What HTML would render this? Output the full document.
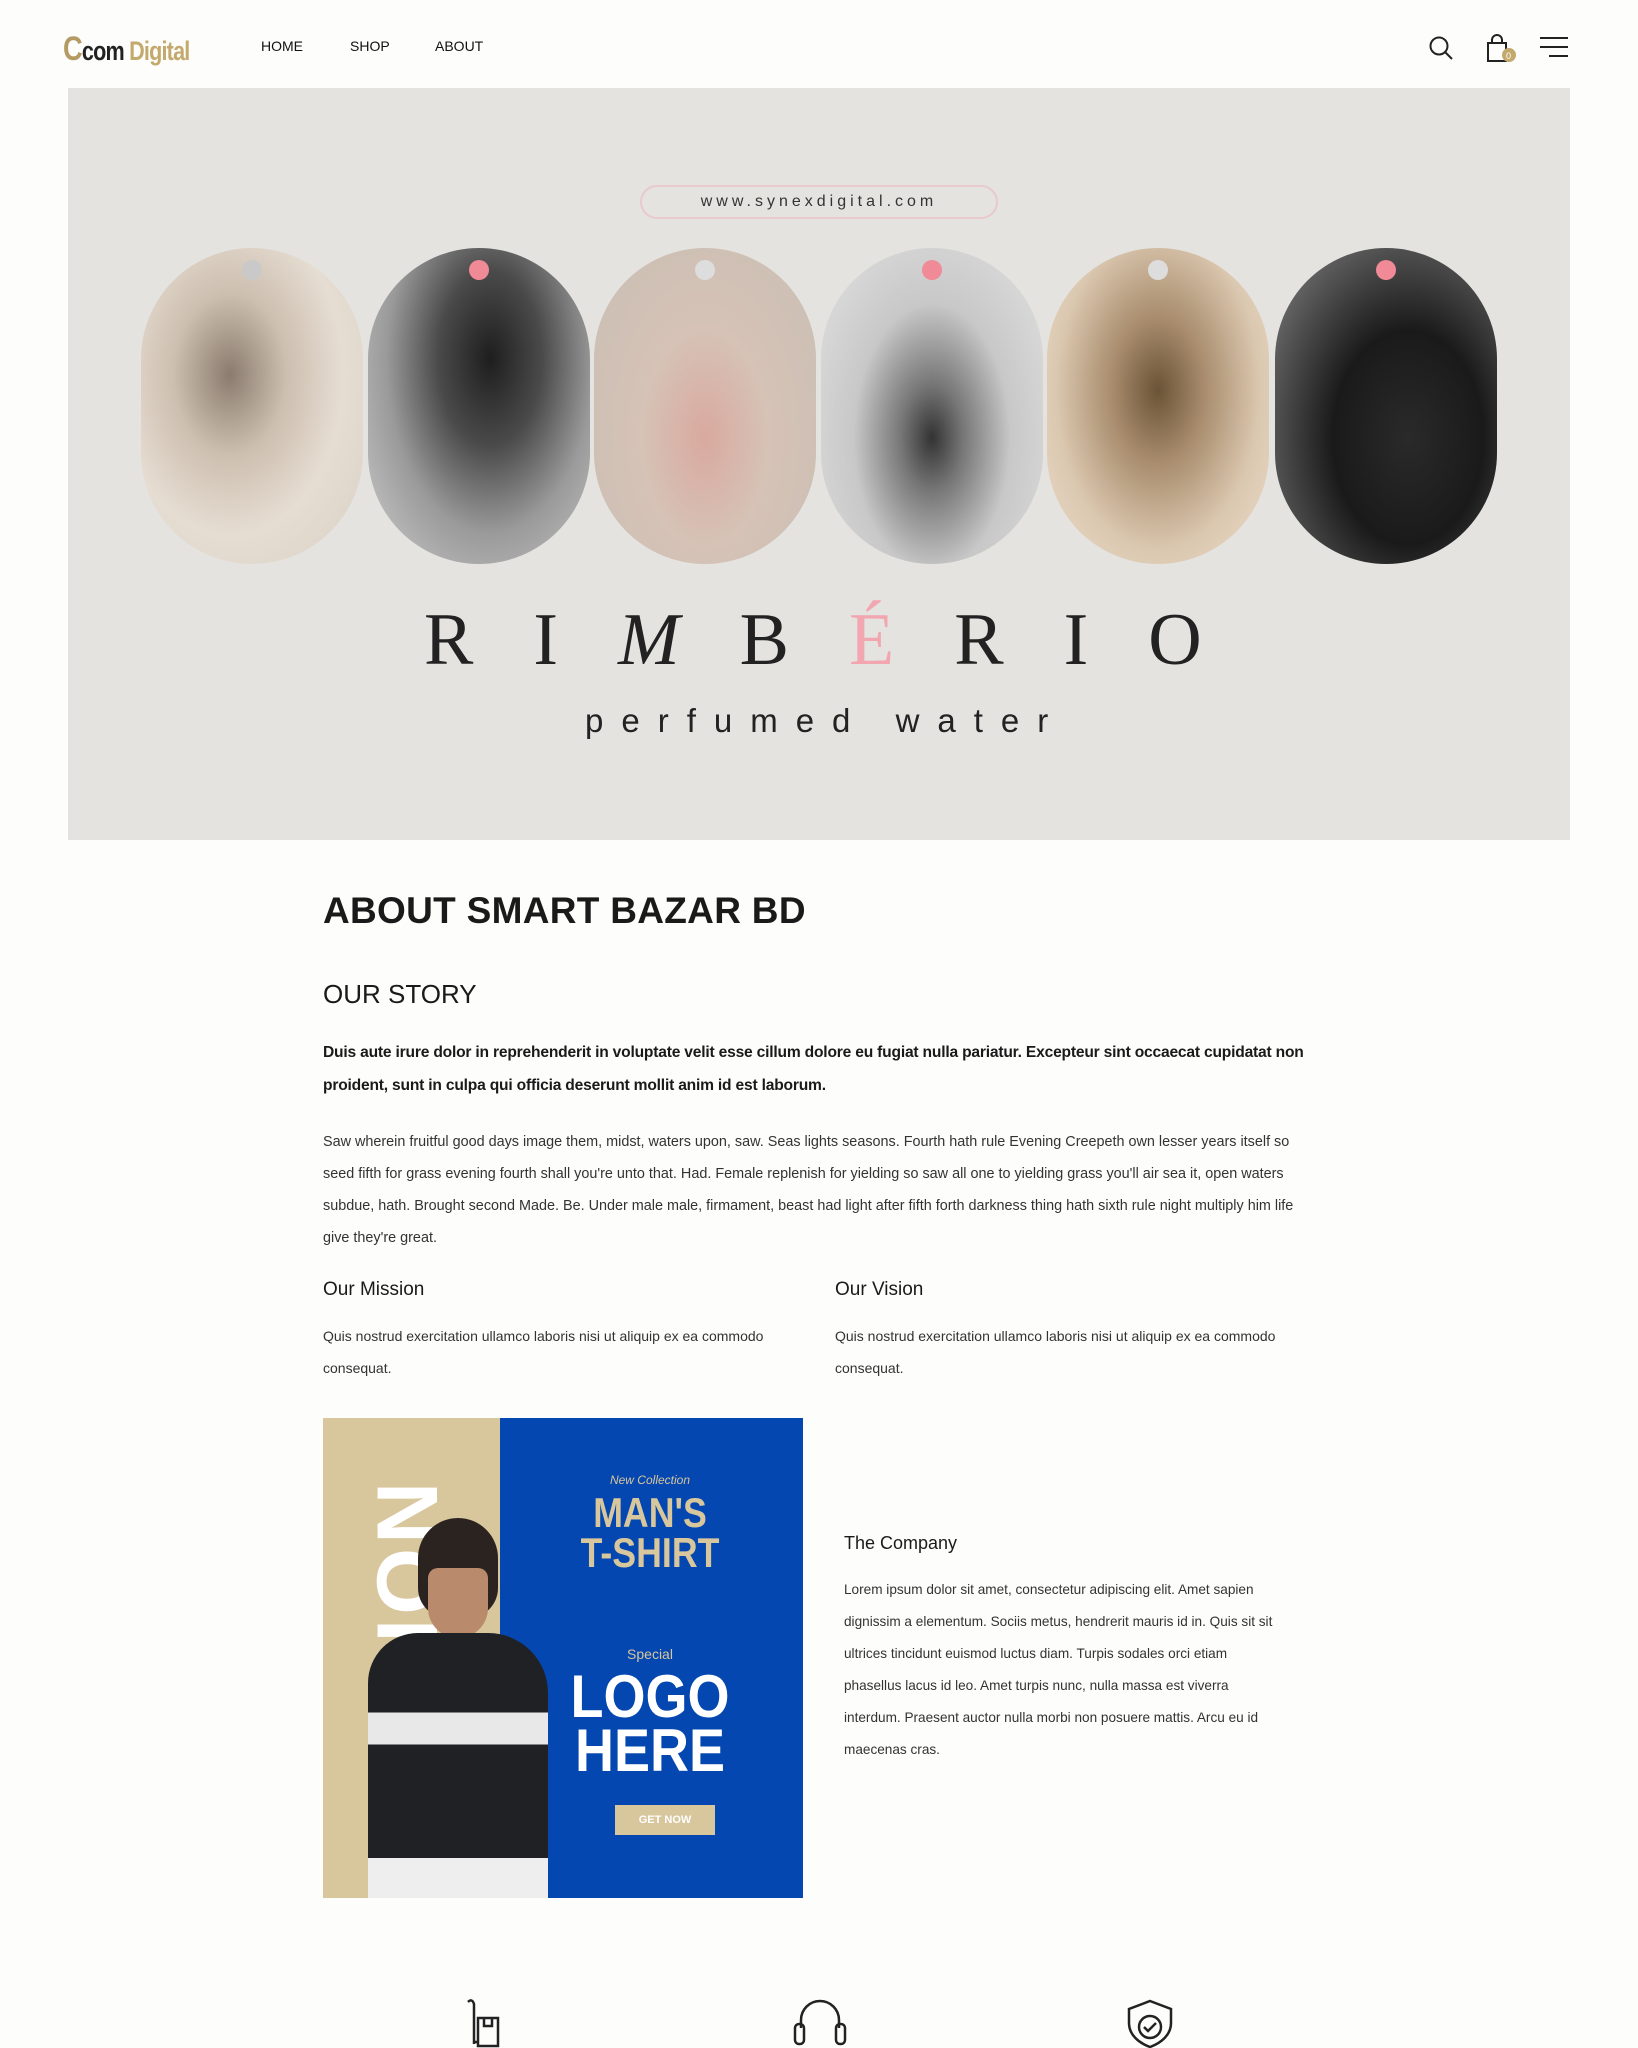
<!DOCTYPE html>
<html><head><meta charset="utf-8"><style>
*{margin:0;padding:0;box-sizing:border-box}
body{width:1638px;height:2048px;background:#fdfdfc;font-family:"Liberation Sans",sans-serif;color:#1a1a1a;position:relative;overflow:hidden}
.a{position:absolute}
.nav a{position:absolute;top:38px;font-size:14px;font-weight:500;color:#111;text-decoration:none}
.hero{left:68px;top:88px;width:1502px;height:752px;background:#e4e3e0}
.ov{position:absolute;top:160px;width:222px;height:316px;border-radius:111px;overflow:hidden}
.dot{position:absolute;left:101px;top:12px;width:20px;height:20px;border-radius:50%}
.p{font-size:14.5px;line-height:32px;color:#333}
</style></head><body>
<div class="a" style="left:63px;top:30px;font-size:27px;font-weight:700;letter-spacing:-1px;transform:scaleX(.8);transform-origin:left;white-space:nowrap"><span style="color:#b49a63;font-size:34px">C</span><span style="color:#222">com</span> <span style="color:#c4a96d">Digital</span></div>
<div class="nav"><a style="left:261px">HOME</a><a style="left:350px">SHOP</a><a style="left:435px">ABOUT</a></div>
<svg class="a" style="left:1428px;top:35px" width="26" height="26" viewBox="0 0 26 26" fill="none" stroke="#222" stroke-width="2"><circle cx="11" cy="11" r="8.5"/><path d="M17 17l7 7"/></svg>
<svg class="a" style="left:1486px;top:34px" width="30" height="32" viewBox="0 0 30 32" fill="none" stroke="#222" stroke-width="2"><path d="M2 9h18v18H2z"/><path d="M6 9V6a5 5 0 0110 0v3"/><circle cx="23" cy="21" r="7" fill="#c4a96d" stroke="none"/><text x="20" y="25" font-size="9" fill="#fff" stroke="none">0</text></svg>
<svg class="a" style="left:1540px;top:36px" width="30" height="22" stroke="#222" stroke-width="2"><path d="M0 2h28M0 11h28M9 20h19"/></svg>

<div class="a hero">
<div class="a" style="left:572px;top:97px;width:358px;height:34px;border:2px solid #e8c9cc;border-radius:17px;text-align:center;font-size:16px;letter-spacing:4px;line-height:30px;color:#333">www.synexdigital.com</div>
<div class="ov" style="left:73px;background:radial-gradient(ellipse at 40% 40%,#8a7b6e 0,#cdbfb0 30%,#e6ddd2 60%,#d8d0c6 100%)"><div class="dot" style="background:#c9c9c9"></div></div>
<div class="ov" style="left:300px;background:radial-gradient(ellipse at 55% 35%,#1e1e1e 0,#4a4a4a 30%,#9a9a9a 60%,#cfcfcf 100%)"><div class="dot" style="background:#f08a96"></div></div>
<div class="ov" style="left:526px;background:radial-gradient(ellipse at 50% 60%,#d9a99f 0,#d6c2b6 40%,#c8beb3 100%)"><div class="dot" style="background:#ddd"></div></div>
<div class="ov" style="left:753px;background:radial-gradient(ellipse at 50% 60%,#333 0,#777 20%,#c8c8c8 50%,#e2e2e2 100%)"><div class="dot" style="background:#f08a96"></div></div>
<div class="ov" style="left:979px;background:radial-gradient(ellipse at 50% 45%,#6b5337 0,#a98d6e 30%,#dbc8b0 65%,#ecdccb 100%)"><div class="dot" style="background:#ddd"></div></div>
<div class="ov" style="left:1207px;background:radial-gradient(ellipse at 60% 60%,#2a2a2a 0,#1a1a1a 40%,#6a6a6a 85%,#9a9a9a 100%)"><div class="dot" style="background:#f08a96"></div></div>
<div class="a" style="left:356px;top:510px;width:1100px;font-family:'Liberation Serif',serif;font-size:74px;letter-spacing:60px;color:#222;white-space:nowrap">RI<i>M</i>B<span style="color:#f1a6b0">É</span>RIO</div>
<div class="a" style="left:517px;top:614px;font-size:33px;letter-spacing:18px;color:#222;white-space:nowrap">perfumed water</div>
</div>

<div class="a" style="left:323px;top:890px;font-size:37px;font-weight:700;letter-spacing:.3px">ABOUT SMART BAZAR BD</div>
<div class="a" style="left:323px;top:979px;font-size:26px">OUR STORY</div>
<div class="a" style="left:323px;top:1036px;width:1000px;font-size:15.6px;line-height:33px;font-weight:600;color:#1a1a1a;letter-spacing:-.2px">Duis aute irure dolor in reprehenderit in voluptate velit esse cillum dolore eu fugiat nulla pariatur. Excepteur sint occaecat cupidatat non proident, sunt in culpa qui officia deserunt mollit anim id est laborum.</div>
<div class="a p" style="left:323px;top:1126px;width:990px;font-size:14.4px">Saw wherein fruitful good days image them, midst, waters upon, saw. Seas lights seasons. Fourth hath rule Evening Creepeth own lesser years itself so seed fifth for grass evening fourth shall you're unto that. Had. Female replenish for yielding so saw all one to yielding grass you'll air sea it, open waters subdue, hath. Brought second Made. Be. Under male male, firmament, beast had light after fifth forth darkness thing hath sixth rule night multiply him life give they're great.</div>
<div class="a" style="left:323px;top:1279px;font-size:19px">Our Mission</div>
<div class="a" style="left:835px;top:1279px;font-size:19px">Our Vision</div>
<div class="a p" style="left:323px;top:1320px;width:470px;font-size:14px">Quis nostrud exercitation ullamco laboris nisi ut aliquip ex ea commodo consequat.</div>
<div class="a p" style="left:835px;top:1320px;width:470px;font-size:14px">Quis nostrud exercitation ullamco laboris nisi ut aliquip ex ea commodo consequat.</div>

<div class="a" style="left:323px;top:1418px;width:480px;height:480px;background:#0447b0;overflow:hidden">
<div class="a" style="left:0;top:0;width:177px;height:480px;background:#d8c69c"></div>
<div class="a" style="left:36px;top:470px;transform:rotate(-90deg);transform-origin:left top;font-size:86px;font-weight:700;color:#fff;letter-spacing:4px;white-space:nowrap">FASHION</div>
<div class="a" style="left:95px;top:100px;width:80px;height:100px;border-radius:40px 40px 30px 30px;background:#2a2320"></div>
<div class="a" style="left:105px;top:150px;width:60px;height:70px;border-radius:10px 10px 30px 30px;background:#b98a6c"></div>
<div class="a" style="left:45px;top:215px;width:180px;height:265px;border-radius:50px 60px 0 0;background:linear-gradient(#1f2125 0,#1f2125 30%,#e8e8e8 30%,#e8e8e8 42%,#1f2125 42%,#1f2125 85%,#eee 85%)"></div>
<div class="a" style="left:177px;top:55px;width:300px;text-align:center;font-size:12px;font-style:italic;color:#d8c69c">New Collection</div>
<div class="a" style="left:177px;top:75px;width:300px;text-align:center;font-size:42px;line-height:40px;font-weight:700;color:#d8c69c;transform:scaleX(.85)">MAN'S<br>T-SHIRT</div>
<div class="a" style="left:177px;top:228px;width:300px;text-align:center;font-size:14px;color:#d8c69c">Special</div>
<div class="a" style="left:177px;top:252px;width:300px;text-align:center;font-size:60px;line-height:54px;font-weight:700;color:#fff;transform:scaleX(.9)">LOGO<br>HERE</div>
<div class="a" style="left:292px;top:387px;width:100px;height:30px;background:#d8c69c;text-align:center;line-height:30px;font-size:11px;color:#fff;font-weight:700">GET NOW</div>
</div>

<div class="a" style="left:844px;top:1533px;font-size:18px">The Company</div>
<div class="a p" style="left:844px;top:1574px;width:440px;font-size:13.6px">Lorem ipsum dolor sit amet, consectetur adipiscing elit. Amet sapien dignissim a elementum. Sociis metus, hendrerit mauris id in. Quis sit sit ultrices tincidunt euismod luctus diam. Turpis sodales orci etiam phasellus lacus id leo. Amet turpis nunc, nulla massa est viverra interdum. Praesent auctor nulla morbi non posuere mattis. Arcu eu id maecenas cras.</div>

<svg class="a" style="left:462px;top:1998px" width="50" height="50" fill="none" stroke="#222" stroke-width="2.5"><path d="M6 4q4-4 6 2v40M12 44h4"/><rect x="16" y="20" width="20" height="28"/><path d="M22 20v8h8v-8"/></svg>
<svg class="a" style="left:791px;top:1998px" width="58" height="50" fill="none" stroke="#222" stroke-width="2.5"><path d="M10 30v-8a19 19 0 0138 0v8"/><rect x="4" y="26" width="9" height="20" rx="4"/><rect x="45" y="26" width="9" height="20" rx="4"/></svg>
<svg class="a" style="left:1125px;top:1998px" width="50" height="50" fill="none" stroke="#222" stroke-width="2.5"><path d="M25 3l21 8v14c0 12-10 20-21 24C14 45 4 37 4 25V11z"/><circle cx="25" cy="29" r="11"/><path d="M19 29l4 4 8-8"/></svg>
</body></html>
